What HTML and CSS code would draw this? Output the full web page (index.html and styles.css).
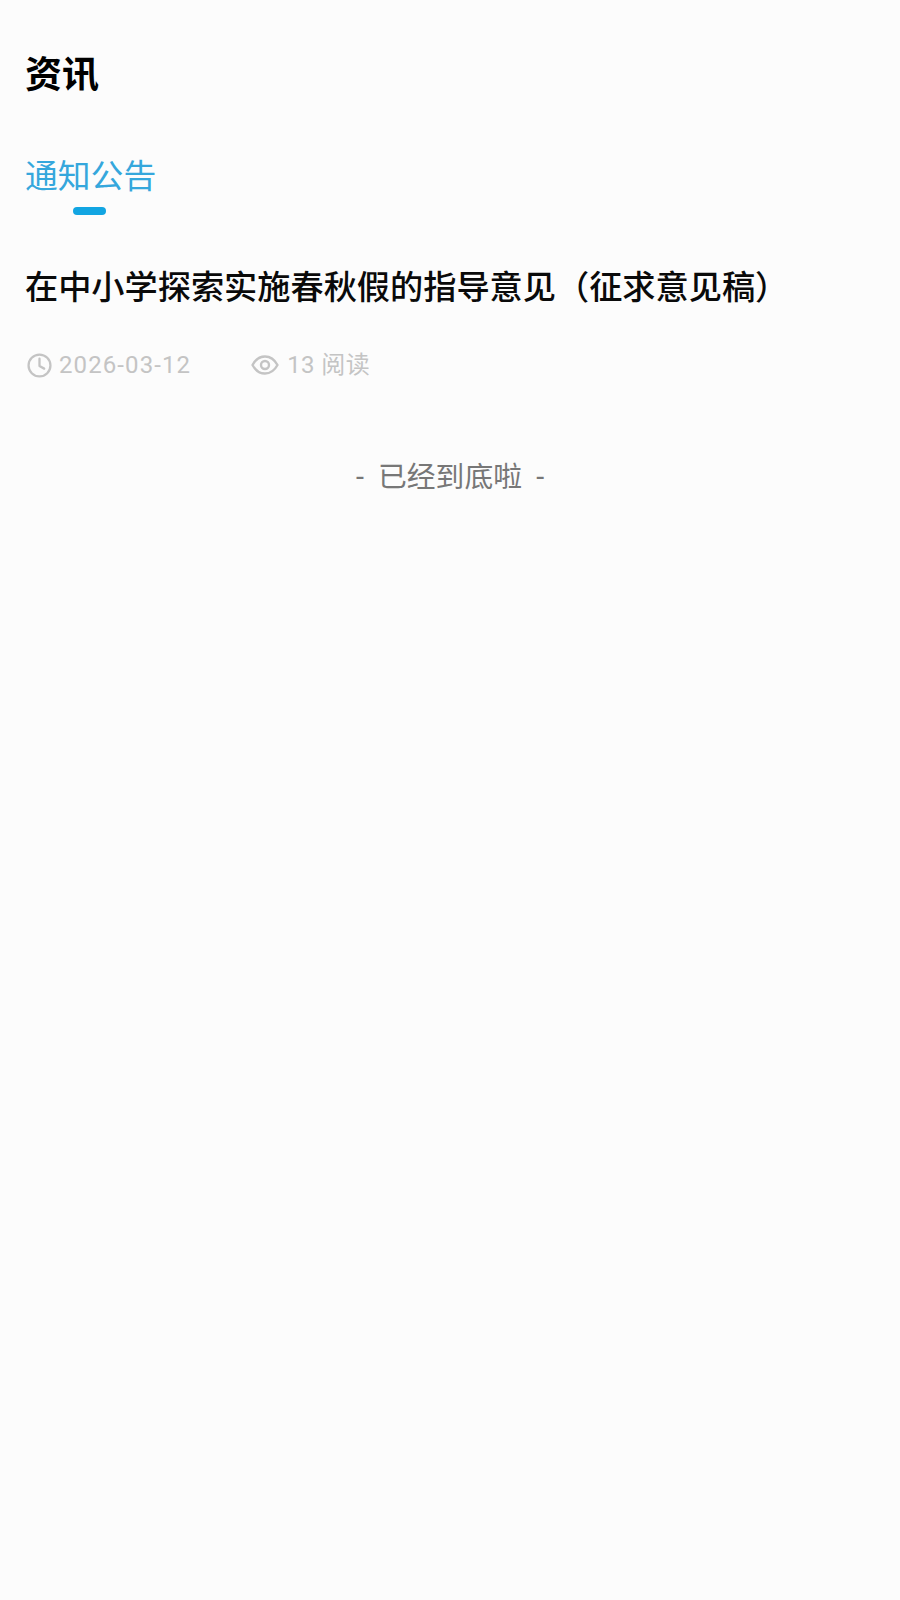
FILE: index.html
```html
<!DOCTYPE html>
<html lang="zh-CN">
<head>
    <meta charset="UTF-8">
    <meta name="viewport" content="width=device-width, initial-scale=1.0">
    <title>资讯</title>
    <link rel="stylesheet" href="styles.css">
</head>
<body>
    <h1 class="page-title">资讯</h1>

    <div class="tabs">
        <div class="tab active">通知公告</div>
    </div>

    <div class="article">
        <h2 class="article-title">在中小学探索实施春秋假的指导意见（征求意见稿）</h2>
        <div class="article-meta">
            <span class="meta-item date">
                <svg class="icon" viewBox="0 0 24 24" fill="none" stroke="currentColor" stroke-width="2.2" stroke-linecap="round" stroke-linejoin="round">
                    <circle cx="12" cy="12" r="10.5"></circle>
                    <path d="M12 5.5V12.5L16.5 15"></path>
                </svg>
                2026-03-12
            </span>
            <span class="meta-item views">
                <svg class="icon eye" viewBox="0 0 28 20" fill="none" stroke="currentColor" stroke-width="2.4" stroke-linecap="round" stroke-linejoin="round">
                    <path d="M1.5 10C4.5 4.5 9 1.5 14 1.5S23.500 4.500 26.500 10C23.500 15.500 19 18.500 14 18.500S4.500 15.500 1.500 10Z"></path>
                    <circle cx="14" cy="10" r="4"></circle>
                </svg>
                13 阅读
            </span>
        </div>
    </div>

    <div class="list-end">- 已经到底啦 -</div>
</body>
</html>
```

FILE: styles.css
```css
body {
    margin: 0;
    min-height: 1600px;
    background-color: #fcfcfc;
    color: #000;
    font-family: Roboto, "Noto Sans CJK SC", sans-serif;
}

.page-title {
    margin: 0;
    padding: 53px 25px 0;
    font-size: 37px;
    line-height: 46px;
    font-weight: 700;
}

.tabs {
    display: flex;
    padding: 0 25px;
    margin-top: 55px;
}

.tab {
    position: relative;
    font-size: 32.800px;
    line-height: 46px;
    padding-bottom: 15px;
}

.tab.active {
    color: #35a7dc;
}

.tab.active::after {
    content: "";
    position: absolute;
    left: 48px;
    bottom: 0;
    width: 33px;
    height: 8px;
    border-radius: 4px;
    background-color: #12a5e2;
}

.article {
    padding: 0 25px;
    margin-top: 49px;
}

.article-title {
    margin: 0;
    font-size: 33.200px;
    line-height: 48px;
    font-weight: 500;
    color: #0a0a0a;
}

.article-meta {
    display: flex;
    align-items: center;
    margin-top: 36px;
    font-size: 24px;
    line-height: 34px;
    color: #c4c4c4;
}

.meta-item {
    display: flex;
    align-items: center;
    gap: 8px;
}

.meta-item.date {
    gap: 7px;
    letter-spacing: 1.100px;
    margin-right: 59px;
}

.meta-item.views {
    letter-spacing: 0.400px;
}

.icon {
    width: 25px;
    height: 25px;
    flex-shrink: 0;
    margin-left: 2px;
}

.icon.eye {
    width: 28px;
    height: 20px;
    margin-left: 1px;
}

.list-end {
    margin-top: 75px;
    text-align: center;
    font-size: 28.800px;
    line-height: 40px;
    word-spacing: 7px;
    color: #777;
}
```
